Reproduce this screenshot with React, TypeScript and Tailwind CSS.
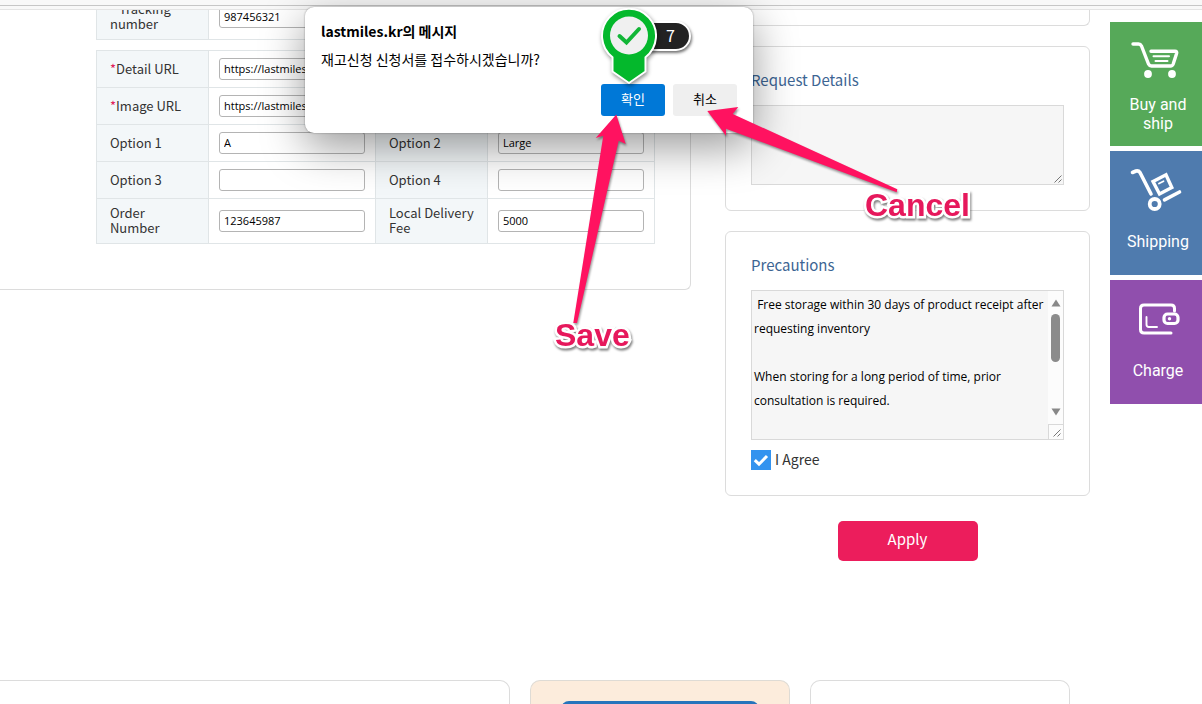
import React from "react";

const body = "font-['Noto_Sans_CJK_KR','Open_Sans',sans-serif]";
const legacy = "font-['Open_Sans','Noto_Sans_CJK_KR',sans-serif]";

type FieldProps = { id: string; label: string; value?: string; required?: boolean; span?: number };

function Field({ id, label, value = "", required = false, span = 1 }: FieldProps) {
  return (
    <>
      <th scope="row" className="border border-[#e0e5e7] bg-[#f3f7f9] pr-1 pb-0.5 pl-[13px] text-left align-middle text-[13px] leading-[15px] font-normal text-[#333]">
        <label htmlFor={id} className="block whitespace-pre-line">
          {required && <span className="text-[#e0205a]">*</span>}
          {label}
        </label>
      </th>
      <td colSpan={span} className="border border-[#e0e5e7] px-2.5 align-middle">
        <input
          id={id}
          type="text"
          defaultValue={value}
          className={`block h-[22px] w-[146px] rounded-[3px] border border-[#b4b4b4] bg-white px-1 pb-0.5 text-[11px] text-black ${legacy}`}
        />
      </td>
    </>
  );
}

function Columns() {
  return (
    <colgroup>
      <col className="w-[112px]" />
      <col className="w-[167px]" />
      <col className="w-[112px]" />
      <col className="w-[167px]" />
    </colgroup>
  );
}

function ProductForm() {
  return (
    <section className="min-w-0 flex-1 overflow-hidden rounded-br-md border-r border-b border-[#dcdcdc] pr-[35px] pb-[45px]">
      <table className="-mt-4 ml-auto w-[559px] table-fixed border-collapse">
        <Columns />
        <tbody>
          <tr className="h-[45px]">
            <Field id="tracking" label=" Tracking number" value="987456321" required span={3} />
          </tr>
        </tbody>
      </table>
      <table className="mt-2.5 ml-auto w-[559px] table-fixed border-collapse">
        <Columns />
        <tbody>
          <tr className="h-[37px]">
            <Field id="detail-url" label="Detail URL" value="https://lastmiles.kr" required span={3} />
          </tr>
          <tr className="h-[37px]">
            <Field id="image-url" label="Image URL" value="https://lastmiles.kr" required span={3} />
          </tr>
          <tr className="h-[37px]">
            <Field id="option-1" label="Option 1" value="A" />
            <Field id="option-2" label="Option 2" value="Large" />
          </tr>
          <tr className="h-[37px]">
            <Field id="option-3" label="Option 3" />
            <Field id="option-4" label="Option 4" />
          </tr>
          <tr className="h-[45px]">
            <Field id="order-number" label={"Order\nNumber"} value="123645987" />
            <Field id="delivery-fee" label="Local Delivery Fee" value="5000" />
          </tr>
        </tbody>
      </table>
    </section>
  );
}

const precautions =
  " Free storage within 30 days of product receipt after requesting inventory\n\nWhen storing for a long period of time, prior consultation is required.";

function Grip() {
  return (
    <svg viewBox="0 0 8 8" className="size-2" stroke="#555" strokeWidth="0.8" aria-hidden="true">
      <path d="M0.5 7.5 7.5 0.5M4.5 7.5 7.5 4.5" />
    </svg>
  );
}

function RequestColumn() {
  const card = "mt-5 rounded-md border border-[#dcdcdc] px-[25px] pt-[21px] pb-[25px]";
  const heading = "text-[15px] leading-6 text-[#3d6593]";
  return (
    <div className="w-[365px] shrink-0">
      <div className="h-4 rounded-b-md border border-t-0 border-[#dcdcdc]" />
      <section className={card}>
        <h2 className={heading}>
          <label htmlFor="request">Request Details</label>
        </h2>
        <div className="relative mt-[13px]">
          <textarea id="request" className={`block h-20 w-full resize-none border border-[#d9d9d9] bg-[#f6f6f6] p-1 text-xs leading-6 ${legacy}`} />
          <span className="absolute right-0.5 bottom-0.5"><Grip /></span>
        </div>
      </section>
      <section className={card}>
        <h2 className={heading}>
          <label htmlFor="precautions">Precautions</label>
        </h2>
        <div className="mt-[13px] flex h-[150px] border border-[#d9d9d9]">
          <textarea
            id="precautions"
            readOnly
            value={precautions}
            className={`block h-full min-w-0 flex-1 resize-none overflow-hidden bg-[#f6f6f6] pt-0.5 pl-0.5 text-xs leading-6 text-black ${legacy}`}
          />
          <div className="flex w-[15px] flex-col items-center bg-[#fcfcfc]">
            <svg viewBox="0 0 10 8" className="mt-2 h-2 w-2.5" fill="#888" aria-hidden="true">
              <path d="M5 0.5 9.5 7.5H0.5Z" />
            </svg>
            <div className="mt-[7px] h-12 w-[9px] rounded-full bg-[#8b8b8b]" />
            <svg viewBox="0 0 10 8" className="mt-auto mb-2 h-2 w-2.5" fill="#888" aria-hidden="true">
              <path d="M5 7.5 9.5 0.5H0.5Z" />
            </svg>
            <div className="flex h-[15px] w-full items-end justify-end border-t border-l border-[#d9d9d9] p-0.5">
              <Grip />
            </div>
          </div>
        </div>
        <label className="mt-2.5 flex h-5 items-center gap-1 text-sm leading-[18px] text-[#333]">
          <span className="relative block size-5">
            <input type="checkbox" defaultChecked className="peer block size-5 appearance-none bg-white outline outline-[#d9d9d9] checked:bg-[#3393ef] checked:outline-none" />
            <svg viewBox="0 0 20 20" className="pointer-events-none absolute inset-0 hidden size-5 peer-checked:block" fill="none" stroke="#fff" strokeWidth="3" aria-hidden="true">
              <path d="M3.8 10.2 8 14.2 16 6" />
            </svg>
          </span>
          <span className="pb-0.5">I Agree</span>
        </label>
      </section>
      <button type="button" className="mx-auto mt-[25px] block h-10 w-[140px] rounded-[5px] bg-[#ec1d5c] pb-1 text-[15px] text-white">
        Apply
      </button>
    </div>
  );
}

function CartIcon() {
  return (
    <svg viewBox="0 0 50 38" className="h-[38px] w-[50px]" fill="none" stroke="#fff" strokeLinecap="round" strokeLinejoin="round" aria-hidden="true">
      <path strokeWidth="3.4" d="M2 3H7.500Q9.500 3 10.500 5L17.500 23Q18.500 25 20.500 25H39.500Q41.500 25 42.200 23L45.600 12.500Q46.200 10.200 44 10.200H20" />
      <path strokeWidth="2" d="M22.500 15.200H38M24.500 20H36.500" />
      <circle cx="17" cy="33" r="3.900" fill="#fff" stroke="none" />
      <circle cx="41" cy="33" r="3.900" fill="#fff" stroke="none" />
    </svg>
  );
}

function TrolleyIcon() {
  return (
    <svg viewBox="0 0 52 44" className="h-11 w-[52px]" fill="none" stroke="#fff" strokeLinecap="round" strokeLinejoin="round" aria-hidden="true">
      <path strokeWidth="3.600" d="M2.500 5.500 6 4Q8.500 3.300 10 5.500L21 27" />
      <circle cx="24.700" cy="37" r="5" strokeWidth="3.800" />
      <path strokeWidth="3.600" d="M34.500 32.800 49.500 25" />
      <path strokeWidth="3.400" strokeLinejoin="miter" d="M23 14.500 36 7.800 41.800 20.500 29.500 27Z" />
      <path strokeWidth="1.800" d="M29 16.500 33.500 14.200" />
    </svg>
  );
}

function WalletIcon() {
  return (
    <svg viewBox="0 0 42 32" className="ml-1.5 h-8 w-[42px]" fill="none" stroke="#fff" strokeLinecap="round" strokeLinejoin="round" aria-hidden="true">
      <path strokeWidth="3" d="M36.500 8V5.500Q36.500 2 33 2H6Q2.500 2 2.500 5.500V26.500Q2.500 30 6 30H33" />
      <rect x="26" y="11" width="14" height="9.500" rx="3.500" strokeWidth="3.200" />
      <circle cx="31.500" cy="15.800" r="1.700" fill="#fff" stroke="none" />
      <path strokeWidth="1.900" d="M8.500 14V21.500Q8.500 24 11 24H19" />
    </svg>
  );
}

function QuickMenu() {
  const item = "flex h-[124px] flex-col items-center text-center text-base leading-[19px] text-white font-['Roboto',sans-serif]";
  return (
    <nav aria-label="Quick menu" className="mt-3 ml-5 flex w-[92px] shrink-0 flex-col gap-[5px]">
      <a href="#buy" className={`${item} bg-[#56a959] pt-[19px]`}>
        <CartIcon />
        <span className="mt-4 pr-3 pl-4">Buy and ship</span>
      </a>
      <a href="#shipping" className={`${item} bg-[#4f7bae] pt-4`}>
        <TrolleyIcon />
        <span className="mt-[21px] pl-1">Shipping</span>
      </a>
      <a href="#charge" className={`${item} bg-[#904fad] pt-[23px]`}>
        <WalletIcon />
        <span className="mt-[26px] pl-1">Charge</span>
      </a>
    </nav>
  );
}

function ConfirmDialog() {
  return (
    <div
      role="dialog"
      aria-labelledby="dialog-title"
      className="absolute top-[7px] left-[305px] flex h-[126px] w-[448px] flex-col rounded-[9px] bg-white px-4 pt-[13px] pb-[17px] text-sm text-black shadow-[0_14px_44px_rgba(0,0,0,0.4),0_0_2px_rgba(0,0,0,0.4)]"
    >
      <h1 id="dialog-title" className="leading-[22px] font-bold">lastmiles.kr의 메시지</h1>
      <p className="mt-1.5 leading-[22px]">재고신청 신청서를 접수하시겠습니까?</p>
      <div className="mt-auto flex justify-end gap-2 text-[13px]">
        <button type="button" className="h-8 w-16 rounded-[3px] bg-[#0078d7] pb-0.5 text-white">확인</button>
        <button type="button" className="h-8 w-16 rounded-[3px] bg-[#efefef] pb-0.5">취소</button>
      </div>
    </div>
  );
}

function Annotations() {
  const caption =
    "absolute text-[32px] leading-9 font-bold text-[#e6185c] font-['Liberation_Sans',sans-serif] [-webkit-text-stroke:5px_white] [paint-order:stroke_fill] drop-shadow-[1px_2px_1px_rgba(0,0,0,0.5)]";
  return (
    <div className="pointer-events-none absolute top-0 left-0">
      <div className="absolute top-[21px] left-[640px] flex h-[30px] w-[51px] items-center justify-end rounded-r-full border-2 border-white bg-[#222] pr-3.5 pb-0.5 text-base text-white shadow-[1px_2px_3px_rgba(0,0,0,0.55)]">
        7
      </div>
      <svg viewBox="590 0 320 340" width="320" height="340" className="absolute top-0 left-[590px] max-w-none overflow-visible" aria-hidden="true">
        <g className="drop-shadow-[1px_2px_2px_rgba(0,0,0,0.45)]">
          <path fill="#04b82c" stroke="#fff" strokeWidth="2" strokeLinejoin="round" d="M612.500 57.200A27 27 0 1 1 645.500 57.200V71.500L629 83 612.500 71.500Z" />
        </g>
        <circle cx="629" cy="35.500" r="19" fill="#f0f0f0" />
        <path d="M619.500 36 626.500 42.500 639 29" fill="none" stroke="#12b637" strokeWidth="4" strokeLinecap="round" />
        <g fill="#ff1260" className="drop-shadow-[1px_2px_1px_rgba(0,0,0,0.4)]">
          <path d="M616.300 114.500 595.700 138 603.300 135.700 573.300 323H577L618.700 140.700 625.700 144Z" />
          <path d="M707.300 111 738.300 107 732.700 114 897.300 189.300 896.700 192.300 726 128.700V135.700Z" />
        </g>
      </svg>
      <span className={`${caption} top-[317px] left-[555px]`}>Save</span>
      <span className={`${caption} top-[187px] left-[865px]`}>Cancel</span>
    </div>
  );
}

export default function App() {
  return (
    <div className={`relative flex min-h-screen flex-col overflow-hidden bg-white ${body}`}>
      <header className="h-2.5 shrink-0 border-b border-[#e4e4e4] bg-[#f8f8f8] pt-[5px]">
        <div className="h-px bg-[#c6c6c6]" />
      </header>
      <main className="flex items-start">
        <ProductForm />
        <div className="ml-[34px] flex shrink-0 items-start">
          <RequestColumn />
          <QuickMenu />
        </div>
      </main>
      <footer className="mt-[119px] flex flex-1 gap-5 pr-[132px]">
        <div className="flex-1 rounded-tr-[10px] border-t border-r border-[#dcdcdc]" />
        <div className="w-[260px] rounded-t-[10px] border border-b-0 border-[#dedbd5] bg-[#fcecdc] px-[30px] pt-5">
          <div className="h-[3px] overflow-hidden">
            <div className="h-10 rounded-lg bg-[#2674bc]" />
          </div>
        </div>
        <div className="w-[260px] rounded-t-[10px] border border-b-0 border-[#dcdcdc]" />
      </footer>
      <ConfirmDialog />
      <Annotations />
    </div>
  );
}
